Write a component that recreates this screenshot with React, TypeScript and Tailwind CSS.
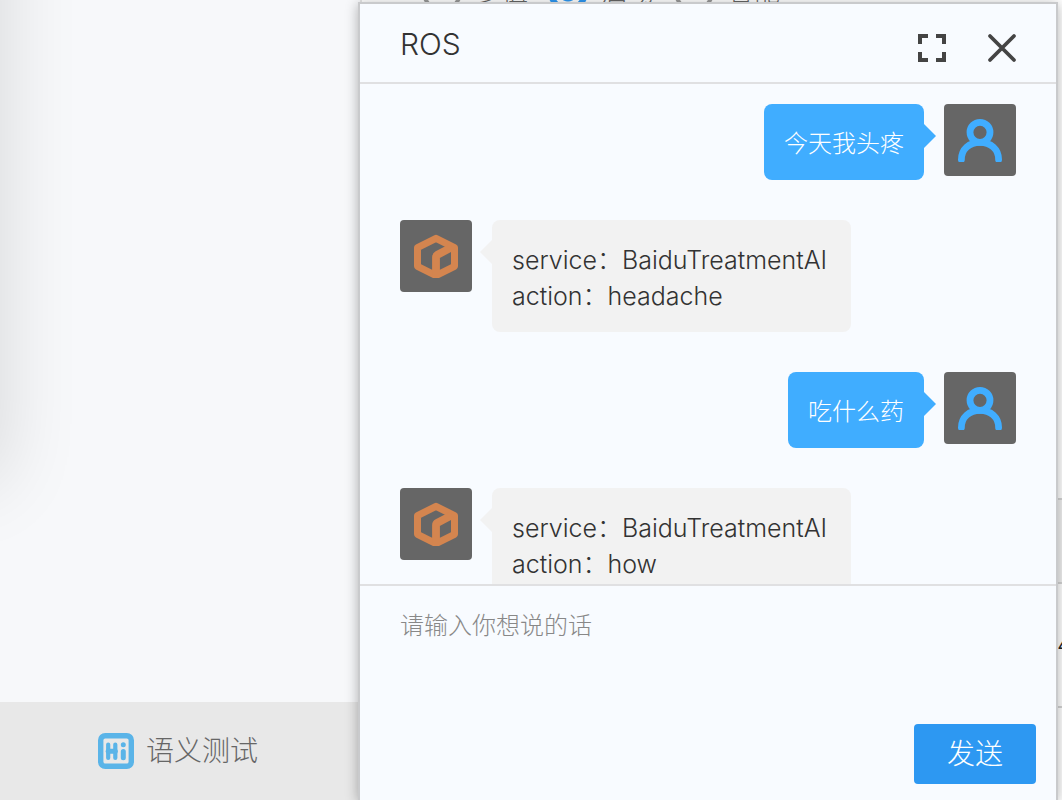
import { useState } from 'react';

type Message = { from: 'user' | 'bot'; lines: string[] };

const messages: Message[] = [
  { from: 'user', lines: ['今天我头疼'] },
  { from: 'bot', lines: ['service：BaiduTreatmentAI', 'action：headache'] },
  { from: 'user', lines: ['吃什么药'] },
  { from: 'bot', lines: ['service：BaiduTreatmentAI', 'action：how'] },
];

const modes = ['多值', '启动', '智能'];

function UserIcon() {
  return (
    <svg viewBox="0 0 44 44" className="size-11" fill="none" stroke="#40adff" strokeWidth="6.800" strokeLinecap="round" aria-hidden="true">
      <circle cx="22" cy="14.300" r="10" />
      <path d="M3.400 41.500C3.400 31 11.500 24.300 22 24.300S40.600 31 40.600 41.500" />
    </svg>
  );
}

function BotIcon() {
  return (
    <svg viewBox="0 0 44 44" className="size-11" fill="none" stroke="#d4854f" strokeWidth="7" strokeLinejoin="round" aria-hidden="true">
      <path d="M22 4.300 40.500 13.600V32.300L22 41.600 3.500 32.300V13.600Z" />
      <path d="M22 41V23.300Q22 21.600 23.500 20.800L38 13.100" strokeWidth="7.800" />
    </svg>
  );
}

function HiIcon() {
  return (
    <svg viewBox="0 0 36 36" className="size-9" fill="none" stroke="#5ab4e8" strokeLinecap="round" aria-hidden="true">
      <rect x="2.700" y="2.700" width="30.600" height="30.600" rx="4.500" strokeWidth="5.400" />
      <path d="M10.200 11.500V25M17.300 11.500V25" strokeWidth="4.200" />
      <path d="M10.200 18.300H17.300" strokeWidth="5" />
      <path d="M25.300 18.500V24.700M25.300 11.700V11.800" strokeWidth="5" />
    </svg>
  );
}

function ChatRow({ message }: { message: Message }) {
  const user = message.from === 'user';
  return (
    <li className={user ? 'flex flex-row-reverse items-start gap-5' : 'flex items-start gap-5'}>
      <div className="flex size-18 shrink-0 items-center justify-center rounded bg-[#666]">
        {user ? <UserIcon /> : <BotIcon />}
      </div>
      <div
        className={
          user
            ? 'relative rounded-lg bg-[#40adff] px-5 pt-[22px] pb-[18px] text-white'
            : 'relative rounded-lg bg-[#f2f2f2] pt-[22px] pr-6 pb-[18px] pl-5 text-[25px] text-[#333]'
        }
      >
        <span
          className={
            user
              ? 'absolute top-5 left-full border-y-12 border-l-12 border-y-transparent border-l-[#40adff]'
              : 'absolute top-5 right-full border-y-12 border-r-12 border-y-transparent border-r-[#f2f2f2]'
          }
        />
        {message.lines.map((line) => (
          <p key={line}>{line}</p>
        ))}
      </div>
    </li>
  );
}

export default function App() {
  const [draft, setDraft] = useState('');
  const [mode, setMode] = useState(1);
  return (
    <div className="relative flex h-screen overflow-hidden bg-white font-['Inter','Noto_Sans_CJK_SC',sans-serif] text-2xl/9 font-light">
      <aside className="relative flex w-[360px] shrink-0 flex-col overflow-hidden bg-[#f7f8fa]">
        <div className="absolute -top-20 -left-20 h-[560px] w-20 shadow-[0_0_80px_rgba(0,0,0,0.14)]" />
        <div className="flex-1" />
        <button type="button" className="flex h-[98px] items-center gap-3 bg-[#e8e8e8] pl-[98px] text-[28px] text-[#666]">
          <HiIcon />
          语义测试
        </button>
      </aside>
      <main className="flex flex-1 flex-col border-l-2 border-[#e4e4e4]">
        <fieldset className="-mt-7 flex h-11 items-center gap-4 pl-15 text-[26px] text-[#666]">
          {modes.map((name, i) => (
            <label key={name} className="flex shrink-0 items-center gap-3.5 pr-1">
              <input
                type="radio"
                name="mode"
                checked={mode === i}
                onChange={() => setMode(i)}
                className="size-10 appearance-none rounded-full border-4 border-[#999] checked:border-6 checked:border-[#2d98f2] checked:bg-[radial-gradient(circle,#2d98f2_9px,transparent_10px)]"
              />
              {name}
            </label>
          ))}
        </fieldset>
        <div className="h-[482px]" />
        <div className="h-[86px] border-y-2 border-[#d4d4d4] bg-[#f0f0f0]" />
        <div className="flex h-[124px] items-center justify-end border-b-2 border-[#d4d4d4] text-[#222]">
          <span className="-mr-2.5">4</span>
        </div>
      </main>

      <section
        aria-label="ROS"
        className="absolute top-0.5 right-1 bottom-0 left-[358px] flex flex-col border-2 border-b-0 border-[#c9cacc] bg-[#f8fbff] shadow-[0_2px_12px_rgba(0,0,0,0.3)]"
      >
        <header className="flex h-20 shrink-0 items-center justify-between border-b-2 border-[#e0e0e2] px-10 text-[#333]">
          <h1 className="pt-0.5 text-[30px]">ROS</h1>
          <div className="-mr-px flex items-center gap-10 pt-2.5">
            <button type="button" aria-label="全屏">
              <svg viewBox="0 0 30 30" className="size-[30px]" fill="none" stroke="#444" strokeWidth="4" aria-hidden="true">
                <path d="M3 11V3H11M19 3H27V11M27 19V27H19M11 27H3V19" />
              </svg>
            </button>
            <button type="button" aria-label="关闭">
              <svg viewBox="0 0 30 30" className="size-[30px]" fill="none" stroke="#444" strokeWidth="3.800" strokeLinecap="round" aria-hidden="true">
                <path d="M3 3 27 27M27 3 3 27" />
              </svg>
            </button>
          </div>
        </header>
        <ul className="flex min-h-0 flex-1 flex-col gap-10 overflow-hidden px-10 pt-5">
          {messages.map((message, i) => (
            <ChatRow key={i} message={message} />
          ))}
        </ul>
        <form className="flex h-[216px] shrink-0 flex-col border-t-2 border-[#e0e0e2] pb-4" onSubmit={(e) => e.preventDefault()}>
          <textarea
            aria-label="请输入你想说的话"
            placeholder="请输入你想说的话"
            value={draft}
            onChange={(e) => setDraft(e.target.value)}
            className="min-h-0 flex-1 resize-none bg-transparent px-10 pt-[22px] outline-none placeholder:text-[#888]"
          />
          <button type="submit" className="mr-5 h-15 self-end rounded bg-[#2d98f2] px-[33px] text-[28px] text-white">
            发送
          </button>
        </form>
      </section>
    </div>
  );
}
